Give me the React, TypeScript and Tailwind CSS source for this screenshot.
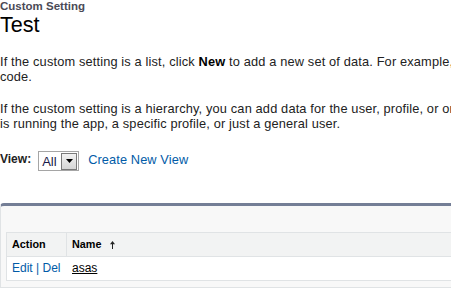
import React from 'react';

function SortUpIcon() {
  return (
    <svg width="5" height="8" viewBox="0 0 5 8" className="shrink-0">
      <path d="M2.5 2.5V8" stroke="#222" strokeWidth="1" />
      <path d="M0 3.2L2.5 0L5 3.2Z" fill="#222" />
    </svg>
  );
}

function ViewSelect() {
  return (
    <div className="flex h-[20px] w-[41px] items-center border border-[#a5a5a5] bg-white pl-[3px] pr-[1px]">
      <span className="flex-1 text-[13px] leading-[15px] text-[#1a1a4a]">All</span>
      <div className="flex h-[17px] w-[16px] items-center justify-center border border-[#7a7a7a] bg-gradient-to-b from-[#f2f2f2] to-[#d6d6d6]">
        <svg width="7" height="4" viewBox="0 0 7 4">
          <path d="M0 0H7L3.5 4Z" fill="#000" />
        </svg>
      </div>
    </div>
  );
}

export default function App() {
  return (
    <div className="h-[290px] w-[451px] overflow-hidden bg-white font-['Liberation_Sans',Arial,sans-serif] text-[12px] text-[#222]">
      <div className="w-[900px]">
        {/* Page header */}
        <div className="text-[11.5px] font-bold leading-[13px] text-[#4a4a56]">Custom Setting</div>
        <h1 className="text-[21.6px] font-normal leading-[24px] text-black">Test</h1>

        {/* Description */}
        <p className="mt-[17px] whitespace-nowrap text-[12.8px] leading-[15px] tracking-[0.15px]">
          If the custom setting is a list, click <b className="font-bold text-black">New</b> to add a new set of data. For example, if your application had a setting for country codes, each set might include the country's name and dialing
          <br />
          code.
        </p>
        <p className="mt-[17px] whitespace-nowrap text-[12.8px] leading-[15px] tracking-[0.15px]">
          If the custom setting is a hierarchy, you can add data for the user, profile, or organization level. For example, you may want different values to display depending on who
          <br />
          is running the app, a specific profile, or just a general user.
        </p>

        {/* View selector */}
        <div className="mt-[20px] flex items-start">
          <span className="mt-[1px] font-bold leading-[15px] text-[#222]">View:</span>
          <div className="ml-[7px]">
            <ViewSelect />
          </div>
          <a className="ml-[9px] mt-[1px] text-[12.8px] leading-[15px] tracking-[0.1px] text-[#015ba7]">Create New View</a>
        </div>

        {/* List block */}
        <div className="mt-[32px] rounded-tl-[4px] border border-t-[3px] border-[#e0e3e5] border-t-[#747e96] bg-[#f8f8f8] pb-[6px] pl-[5px] pt-[26px]">
          <div className="border border-[#e0e3e5] bg-white">
            <div className="flex h-[24px] border-b border-[#e0e3e5] bg-[#f2f3f3] text-[10.8px] font-bold leading-[23px] text-black">
              <div className="w-[60px] border-r border-[#e0e3e5] pl-[5px]">Action</div>
              <div className="flex items-center gap-[9px] pl-[5px]">
                <span>Name</span>
                <SortUpIcon />
              </div>
            </div>
            <div className="flex h-[23px] leading-[23px]">
              <div className="w-[60px] pl-[5px] text-[#015ba7]">
                Edit <span className="text-[#015ba7]">|</span> Del
              </div>
              <div className="pl-[5px]">
                <a className="text-black underline">asas</a>
              </div>
            </div>
          </div>
        </div>
      </div>
    </div>
  );
}
